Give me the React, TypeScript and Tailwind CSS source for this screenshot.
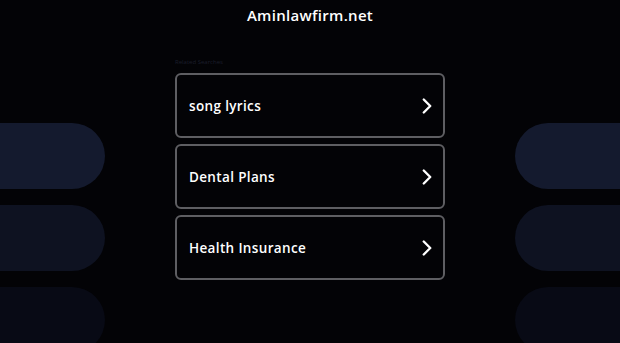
import { ChevronRight } from "lucide-react";

const searches = ["song lyrics", "Dental Plans", "Health Insurance"];
const pills = ["bg-[#141a2e]", "bg-[#0e1221]", "bg-[#080a15]"];

function Pills({ side }: { side: "left" | "right" }) {
  return (
    <div className="flex w-[105px] shrink-0 flex-col gap-[16px] pt-[90px]">
      {pills.map((c) => (
        <div
          key={c}
          className={`h-[66px] w-full ${c} ${side === "left" ? "rounded-r-[33px]" : "rounded-l-[33px]"}`}
        />
      ))}
    </div>
  );
}

export default function App() {
  return (
    <div
      className="h-[343px] w-[620px] overflow-hidden bg-[#030306] text-white"
      style={{ fontFamily: '"Open Sans", "DejaVu Sans", sans-serif' }}
    >
      <header className="flex h-[33px] items-center justify-center pb-[2px]">
        <h1 className="text-[15px] font-semibold tracking-[0.3px]">Aminlawfirm.net</h1>
      </header>

      <div className="flex justify-between">
        <Pills side="left" />

        <div className="flex w-[270px] flex-col pt-[24px]">
          <p className="h-[10px] text-[6px] leading-[10px] text-[#1b1e2c]">Related Searches</p>
          <div className="mt-[6px] flex flex-col gap-[6px]">
            {searches.map((s) => (
              <a
                key={s}
                href="#"
                className="flex h-[65px] items-center justify-between rounded-[6px] border-2 border-[#5e5e62] pl-[12px] pr-[3px]"
              >
                <span className="pt-[2px] text-[13.5px] font-semibold tracking-[0.35px]">{s}</span>
                <ChevronRight className="size-[26px]" strokeWidth={2.2} />
              </a>
            ))}
          </div>
        </div>

        <Pills side="right" />
      </div>
    </div>
  );
}
